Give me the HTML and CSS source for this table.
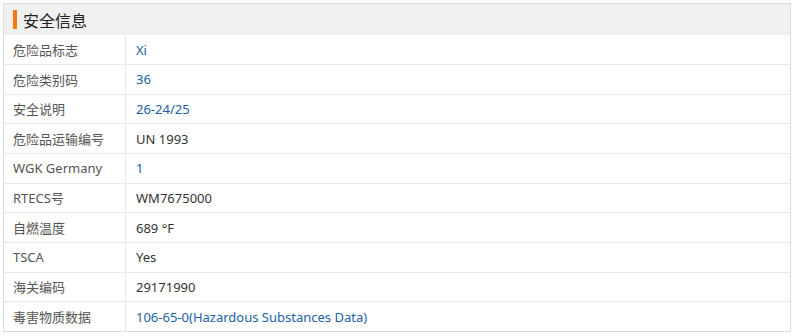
FILE: index.html
```html
<!DOCTYPE html>
<html lang="zh-CN">
<head>
<meta charset="utf-8">
<title>安全信息</title>
<link rel="stylesheet" href="styles.css">
</head>
<body>
<section class="panel">
  <header class="panel-head"><span class="bar"></span><h2>安全信息</h2></header>
  <div class="rows">
    <div class="row"><div class="k">危险品标志</div><div class="v link">Xi</div></div>
    <div class="row"><div class="k">危险类别码</div><div class="v link">36</div></div>
    <div class="row"><div class="k">安全说明</div><div class="v link">26-24/25</div></div>
    <div class="row"><div class="k">危险品运输编号</div><div class="v">UN 1993</div></div>
    <div class="row"><div class="k">WGK Germany</div><div class="v link">1</div></div>
    <div class="row"><div class="k">RTECS号</div><div class="v">WM7675000</div></div>
    <div class="row"><div class="k">自燃温度</div><div class="v">689 °F</div></div>
    <div class="row"><div class="k">TSCA</div><div class="v">Yes</div></div>
    <div class="row"><div class="k">海关编码</div><div class="v">29171990</div></div>
    <div class="row"><div class="k">毒害物质数据</div><div class="v link">106-65-0(Hazardous Substances Data)</div></div>
  </div>
</section>
</body>
</html>
```
FILE: styles.css
```css
html, body { margin: 0; padding: 0; background: #fff; }
body {
  padding: 3px 0 0 3px;
  font-family: "Segoe UI", "Noto Sans", "Noto Sans CJK SC", sans-serif;
  font-size: 13px;
}
.panel {
  width: 788px;
  box-sizing: border-box;
  border: 1px solid #dcdcdc;
}
.panel-head {
  height: 31.33px;
  background: #f0f0f0;
  display: flex;
  align-items: center;
  padding-left: 9px;
  box-sizing: border-box;
}
.bar {
  width: 4px;
  height: 19px;
  background: #f37b0f;
  margin-right: 6px;
}
.panel-head h2 {
  margin: 0;
  font-size: 16px;
  font-weight: normal;
  color: #222;
  font-family: "Noto Sans CJK SC", sans-serif;
  line-height: 20px;
}
.row {
  display: grid;
  grid-template-columns: 122px 1fr;
  height: 29.67px;
  box-sizing: border-box;
  border-bottom: 1px solid #e8e8e8;
}
.row:last-child { border-bottom: none; height: 28.67px; }
.k, .v {
  display: flex;
  align-items: center;
}
.k {
  padding-left: 9px;
  color: #555;
  border-right: 1px solid #e8e8e8;
}
.v {
  padding-left: 10px;
  color: #333;
}
.v.link { color: #1a5fa8; }
```
